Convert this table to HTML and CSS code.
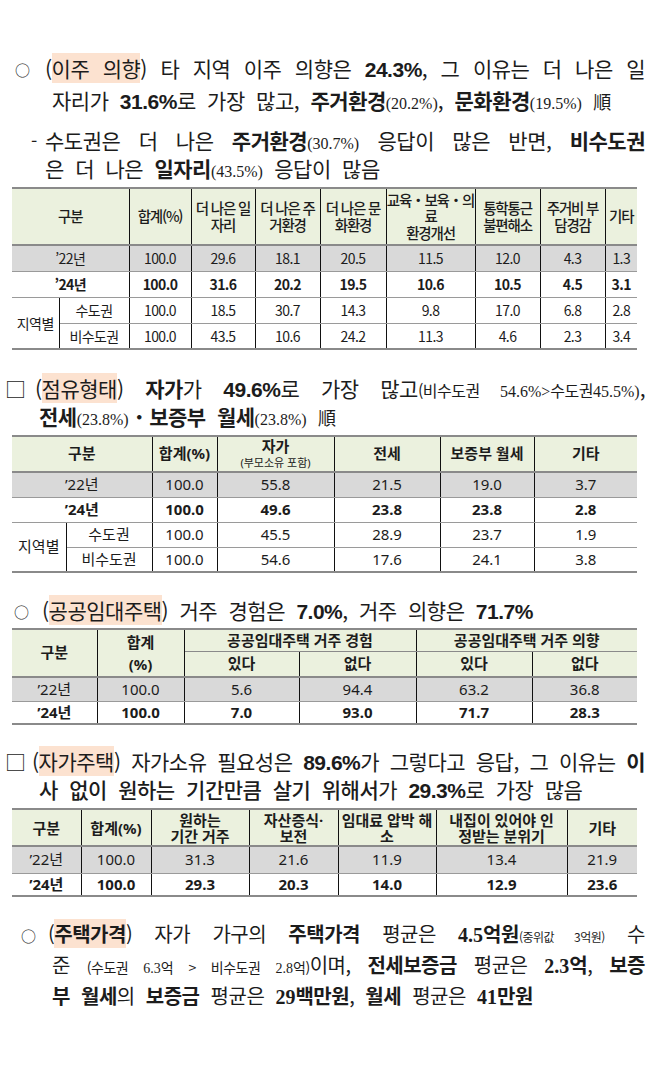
FILE: index.html
```html
<!DOCTYPE html>
<html lang="ko">
<head>
<meta charset="utf-8">
<title>주거실태조사 주요 결과</title>
<link rel="stylesheet" href="styles.css">
</head>
<body>
<div class="page">

  <section class="item s1">
    <span class="mark"><span class="circ">○</span></span>
    <div class="body">
      <div class="ln j">(<span class="hl">이주 의향</span>) 타 지역 이주 의향은 <b class="n">24.3%</b>, 그 이유는 더 나은 일</div>
      <div class="ln ind">자리가 <b class="n">31.6%</b>로 가장 많고, <b>주거환경</b><span class="sn">(20.2%)</span>, <b>문화환경</b><span class="sn">(19.5%)</span> <span class="han">順</span></div>
    </div>
  </section>

  <section class="item s1sub">
    <span class="mark">-</span>
    <div class="body">
      <div class="ln j">수도권은 더 나은 <b>주거환경</b><span class="sn">(30.7%)</span> 응답이 많은 반면, <b>비수도권</b></div>
      <div class="ln">은 더 나은 <b>일자리</b><span class="sn">(43.5%)</span> 응답이 많음</div>
    </div>
  </section>

  <table class="t t1">
    <colgroup>
      <col class="c1"><col class="c2"><col class="c3"><col class="c4"><col class="c5">
      <col class="c6"><col class="c7"><col class="c8"><col class="c9"><col class="c10">
    </colgroup>
    <thead>
      <tr>
        <th colspan="2">구분</th><th>합계(%)</th><th>더 나은 일<br>자리</th><th>더 나은 주<br>거환경</th><th>더 나은 문<br>화환경</th><th>교육・보육・의<br>료<br>환경개선</th><th>통학통근<br>불편해소</th><th>주거비 부<br>담경감</th><th>기타</th>
      </tr>
    </thead>
    <tbody>
      <tr class="gray"><td colspan="2">’22년</td><td>100.0</td><td>29.6</td><td>18.1</td><td>20.5</td><td>11.5</td><td>12.0</td><td>4.3</td><td>1.3</td></tr>
      <tr class="strong"><td colspan="2">’24년</td><td>100.0</td><td>31.6</td><td>20.2</td><td>19.5</td><td>10.6</td><td>10.5</td><td>4.5</td><td>3.1</td></tr>
      <tr><td rowspan="2" class="grp">지역별</td><td>수도권</td><td>100.0</td><td>18.5</td><td>30.7</td><td>14.3</td><td>9.8</td><td>17.0</td><td>6.8</td><td>2.8</td></tr>
      <tr><td>비수도권</td><td>100.0</td><td>43.5</td><td>10.6</td><td>24.2</td><td>11.3</td><td>4.6</td><td>2.3</td><td>3.4</td></tr>
    </tbody>
  </table>

  <section class="item s2">
    <span class="mark"><span class="box">□</span></span>
    <div class="body">
      <div class="ln j">(<span class="hl">점유형태</span>) <b>자가</b>가 <b class="n">49.6%</b>로 가장 많고<span class="sm">(비수도권 <span class="sr">54.6%&gt;</span>수도권<span class="sr">45.5%)</span></span>,</div>
      <div class="ln ind"><b>전세</b><span class="sn">(23.8%)</span>・<b>보증부 월세</b><span class="sn">(23.8%)</span> <span class="han">順</span></div>
    </div>
  </section>

  <table class="t t2">
    <colgroup>
      <col class="c1"><col class="c2"><col class="c3"><col class="c4"><col class="c5"><col class="c6"><col class="c7">
    </colgroup>
    <thead>
      <tr><th colspan="2">구분</th><th>합계(%)</th><th class="two">자가<br><small>(부모소유 포함)</small></th><th>전세</th><th>보증부 월세</th><th>기타</th></tr>
    </thead>
    <tbody>
      <tr class="gray"><td colspan="2">’22년</td><td>100.0</td><td>55.8</td><td>21.5</td><td>19.0</td><td>3.7</td></tr>
      <tr class="strong"><td colspan="2">’24년</td><td>100.0</td><td>49.6</td><td>23.8</td><td>23.8</td><td>2.8</td></tr>
      <tr><td rowspan="2" class="grp">지역별</td><td>수도권</td><td>100.0</td><td>45.5</td><td>28.9</td><td>23.7</td><td>1.9</td></tr>
      <tr><td>비수도권</td><td>100.0</td><td>54.6</td><td>17.6</td><td>24.1</td><td>3.8</td></tr>
    </tbody>
  </table>

  <section class="item s3">
    <span class="mark"><span class="circ">○</span></span>
    <div class="body">
      <div class="ln">(<span class="hl">공공임대주택</span>) 거주 경험은 <b class="n">7.0%</b>, 거주 의향은 <b class="n">71.7%</b></div>
    </div>
  </section>

  <table class="t t3">
    <colgroup>
      <col class="c1"><col class="c2"><col class="c3"><col class="c4"><col class="c5"><col class="c6">
    </colgroup>
    <thead>
      <tr class="h1"><th rowspan="2">구분</th><th rowspan="2" class="tot">합계<br>(%)</th><th colspan="2">공공임대주택 거주 경험</th><th colspan="2">공공임대주택 거주 의향</th></tr>
      <tr class="h2"><th>있다</th><th>없다</th><th>있다</th><th>없다</th></tr>
    </thead>
    <tbody>
      <tr class="gray"><td>’22년</td><td>100.0</td><td>5.6</td><td>94.4</td><td>63.2</td><td>36.8</td></tr>
      <tr class="strong"><td>’24년</td><td>100.0</td><td>7.0</td><td>93.0</td><td>71.7</td><td>28.3</td></tr>
    </tbody>
  </table>

  <section class="item s4">
    <span class="mark"><span class="box">□</span></span>
    <div class="body">
      <div class="ln j">(<span class="hl">자가주택</span>) 자가소유 필요성은 <b class="n">89.6%</b>가 그렇다고 응답, 그 이유는 <b>이</b></div>
      <div class="ln ind"><b class="md">사 없이 원하는 기간만큼 살기 위해서</b>가 <b class="n">29.3%</b>로 가장 많음</div>
    </div>
  </section>

  <table class="t t4">
    <colgroup>
      <col class="c1"><col class="c2"><col class="c3"><col class="c4"><col class="c5"><col class="c6"><col class="c7">
    </colgroup>
    <thead>
      <tr><th>구분</th><th>합계(%)</th><th>원하는<br>기간 거주</th><th>자산증식·<br>보전</th><th>임대료 압박 해<br>소</th><th>내집이 있어야 인<br>정받는 분위기</th><th>기타</th></tr>
    </thead>
    <tbody>
      <tr class="gray"><td>’22년</td><td>100.0</td><td>31.3</td><td>21.6</td><td>11.9</td><td>13.4</td><td>21.9</td></tr>
      <tr class="strong"><td>’24년</td><td>100.0</td><td>29.3</td><td>20.3</td><td>14.0</td><td>12.9</td><td>23.6</td></tr>
    </tbody>
  </table>

  <section class="item s5">
    <span class="mark"><span class="circ">○</span></span>
    <div class="body">
      <div class="ln j">(<b class="hl">주택가격</b>) 자가 가구의 <b>주택가격</b> 평균은 <b><span class="sr">4.5</span>억원</b><span class="xs">(중위값 3억원)</span> 수</div>
      <div class="ln j ind">준 <span class="sm">(수도권 <span class="sr">6.3</span>억 &gt; 비수도권 <span class="sr">2.8</span>억)</span>이며, <b>전세보증금</b> 평균은 <b><span class="sr">2.3</span>억</b>, <b>보증</b></div>
      <div class="ln ind"><b>부 월세</b>의 <b>보증금</b> 평균은 <b><span class="sr">29</span>백만원</b>, <b>월세</b> 평균은 <b><span class="sr">41</span>만원</b></div>
    </div>
  </section>

</div>
</body>
</html>
```

FILE: styles.css
```css
* { box-sizing: border-box; }

body {
  margin: 0;
  background: #ffffff;
  color: #1c1c1c;
  font-family: "Noto Sans CJK KR", "Noto Sans", sans-serif;
  width: 652px;
}

.page {
  padding: 52px 7px 40px 12px;
}

/* ---------- text blocks ---------- */
.item {
  display: flex;
  align-items: flex-start;
}
.mark {
  flex: none;
  font-size: 20px;
  line-height: 32px;
  height: 32px;
}
.body {
  flex: 1;
  min-width: 0;
}
.ln {
  font-size: 21px;
  line-height: 32px;
  height: 32px;
  white-space: nowrap;
  letter-spacing: -0.5px;
  word-spacing: 6px;
}
.ln.j {
  text-align: justify;
  text-align-last: justify;
  word-spacing: 0;
}
.ln span, .ln b { line-height: 1; }
b { font-weight: 700; }
b.md { font-weight: 500; }

.circ {
  font-size: 15px;
  display: inline-block;
}
.box {
  font-size: 21px;
  display: inline-block;
}

.hl {
  background: #fce2d0;
}

.n {
  font-family: "Liberation Sans Narrow", "Liberation Sans", sans-serif;
  font-weight: 700;
  font-size: 21px;
  letter-spacing: -0.5px;
}
.sn {
  font-family: "Liberation Serif", serif;
  font-size: 16px;
  letter-spacing: 0;
}
.sr {
  font-family: "Liberation Serif", serif;
  letter-spacing: 0;
}
.sm {
  font-size: 15px;
}
.xs {
  font-size: 13px;
}
.han {
  font-family: "Noto Sans CJK TC", "Noto Sans CJK KR", serif;
  font-size: 18px;
}

/* section 1 */
.s1 .mark { width: 33px; padding-left: 3px; }
.s1 .ind { padding-left: 7px; }
.s1sub { margin-top: 10px; }
.s1sub .mark { width: 33px; padding-left: 19px; line-height: 28px; height: 28px; font-size: 18px; }
.s1sub .ln { line-height: 28px; height: 28px; }

/* section 2 */
.s2 { margin-top: 24px; }
.s2 .mark { width: 30px; margin-left: -7px; line-height: 28px; height: 28px; }
.s2 .ln { line-height: 28px; height: 28px; }
.s2 .ind { padding-left: 4px; }
.s2 .sm { font-size: 16px; }

/* section 3 */
.s3 { margin-top: 23px; }
.s3 .mark { width: 30px; padding-left: 2px; line-height: 28px; height: 28px; }
.s3 .ln { line-height: 28px; height: 28px; }

/* section 4 */
.s4 { margin-top: 22px; }
.s4 .mark { width: 27px; margin-left: -7px; line-height: 28px; height: 28px; }
.s4 .ln { line-height: 28px; height: 28px; }
.s4 .ind { padding-left: 7px; }

/* section 5 */
.s5 { margin-top: 21px; }
.s5 .mark { width: 36px; padding-left: 9px; line-height: 31px; height: 31px; }
.s5 .ln { line-height: 31px; height: 31px; font-size: 20px; }
.s5 .ind { padding-left: 4px; }
.s5 .sm { font-size: 14px; }
.s5 .xs { font-size: 12px; }

/* ---------- tables ---------- */
.t {
  width: 625px;
  border-collapse: collapse;
  table-layout: fixed;
  border-top: 2px solid #8a8a8a;
  border-bottom: 2px solid #8a8a8a;
  font-family: "Noto Sans", "Noto Sans CJK KR", sans-serif;
  font-size: 15px;
  color: #1c1c1c;
}
.t th, .t td {
  padding: 0;
  text-align: center;
  vertical-align: middle;
  border-left: 1px solid #111;
  border-right: 1px solid #111;
  border-bottom: 1px solid #9a9a9a;
  white-space: nowrap;
  line-height: 1.15;
}
.t tr > :first-child { border-left: none; }
.t tr > :last-child { border-right: none; }
.t td.grp { border-left: none; }
.t thead th {
  background: #ebf1de;
  font-weight: 700;
  border-bottom: 2px solid #8a8a8a;
}
.t tr.gray td { background: #d9d9d9; }
.t tr.strong td { font-weight: 700; }

/* table 1 */
.t1 { margin-top: 5px; font-family: "Noto Sans CJK KR", sans-serif; font-size: 14px; letter-spacing: -0.6px; }
.t1 .c1 { width: 47px; } .t1 .c2 { width: 70px; } .t1 .c3 { width: 62px; }
.t1 .c4 { width: 64px; } .t1 .c5 { width: 65px; } .t1 .c6 { width: 66px; }
.t1 .c7 { width: 89px; } .t1 .c8 { width: 65px; } .t1 .c9 { width: 65px; }
.t1 .c10 { width: 32px; }
.t1 thead tr { height: 57px; }
.t1 thead th { font-weight: 500; font-size: 14.5px; line-height: 16.5px; letter-spacing: -1.2px; }
.t1 tbody tr { height: 26px; }

/* table 2 */
.t2 { margin-top: 5px; }
.t2 .c1 { width: 54px; } .t2 .c2 { width: 86px; } .t2 .c3 { width: 65px; }
.t2 .c4 { width: 117px; } .t2 .c5 { width: 106px; } .t2 .c6 { width: 94px; }
.t2 .c7 { width: 103px; }
.t2 thead tr { height: 36px; }
.t2 th.two { line-height: 15px; }
.t2 th small { font-size: 11px; font-weight: 400; }
.t2 tbody tr { height: 25px; }

/* table 3 */
.t3 { margin-top: 4px; }
.t3 .c1 { width: 85px; } .t3 .c2 { width: 87px; } .t3 .c3 { width: 115px; }
.t3 .c4 { width: 117px; } .t3 .c5 { width: 116px; } .t3 .c6 { width: 105px; }
.t3 tr.h1 { height: 22px; }
.t3 tr.h1 th { border-bottom: 1px solid #8a8a8a; }
.t3 tr.h1 th[rowspan] { border-bottom: 2px solid #8a8a8a; }
.t3 th.tot { line-height: 22px; }
.t3 tr.h2 { height: 26px; }
.t3 tbody tr.gray { height: 24px; }
.t3 tbody tr.strong { height: 23px; }

/* table 4 */
.t4 { margin-top: 5px; }
.t4 .c1 { width: 69px; } .t4 .c2 { width: 70px; } .t4 .c3 { width: 98px; }
.t4 .c4 { width: 89px; } .t4 .c5 { width: 98px; } .t4 .c6 { width: 131px; }
.t4 .c7 { width: 70px; }
.t4 thead tr { height: 37px; }
.t4 thead th { line-height: 16px; }
.t4 tbody tr.gray { height: 27px; }
.t4 tbody tr.strong { height: 23px; }
```
